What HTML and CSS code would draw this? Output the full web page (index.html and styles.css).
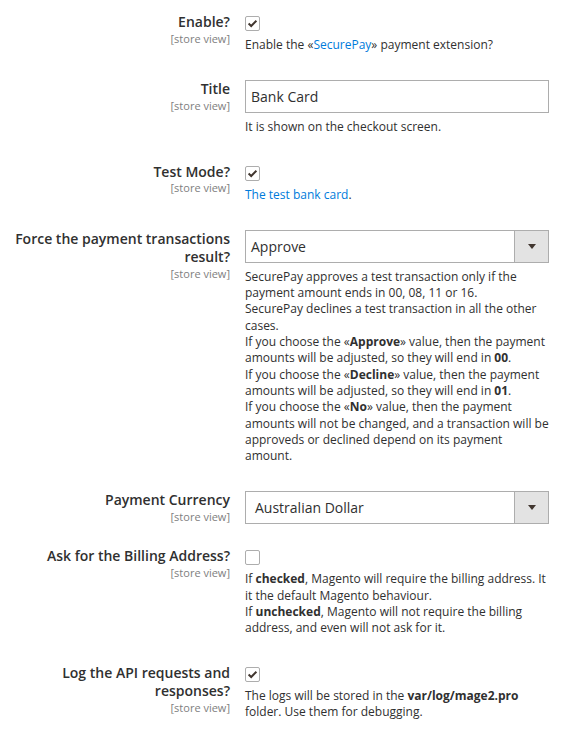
FILE: index.html
```html
<!DOCTYPE html>
<html lang="en">
<head>
<meta charset="utf-8">
<title>SecurePay settings</title>
<link rel="stylesheet" href="styles.css">
</head>
<body>
<div class="form">
  <div class="row">
    <div class="label-cell"><div class="label">Enable?</div><div class="scope">[store view]</div></div>
    <div class="control-cell">
      <span class="checkbox"><svg viewBox="0 0 15 15" width="15" height="15"><path d="M3.6 7.6 L6.2 10 L11.4 4.8" fill="none" stroke="#41362f" stroke-width="2"/></svg></span>
      <div class="note note-check">Enable the «<a class="link">SecurePay</a>» payment extension?</div>
    </div>
  </div>

  <div class="row">
    <div class="label-cell"><div class="label">Title</div><div class="scope">[store view]</div></div>
    <div class="control-cell">
      <div class="input">Bank Card</div>
      <div class="note">It is shown on the checkout screen.</div>
    </div>
  </div>

  <div class="row">
    <div class="label-cell"><div class="label">Test Mode?</div><div class="scope">[store view]</div></div>
    <div class="control-cell">
      <span class="checkbox"><svg viewBox="0 0 15 15" width="15" height="15"><path d="M3.6 7.6 L6.2 10 L11.4 4.8" fill="none" stroke="#41362f" stroke-width="2"/></svg></span>
      <div class="note note-check"><a class="link">The test bank card</a>.</div>
    </div>
  </div>

  <div class="row">
    <div class="label-cell"><div class="label">Force the payment transactions result?</div><div class="scope">[store view]</div></div>
    <div class="control-cell">
      <div class="select"><span class="select-value">Approve</span><span class="select-arrow"></span></div>
      <div class="note">SecurePay approves a test transaction only if the payment amount ends in 00, 08, 11 or 16.<br>SecurePay declines a test transaction in all the other cases.<br>If you choose the «<b>Approve</b>» value, then the payment amounts will be adjusted, so they will end in <b>00</b>.<br>If you choose the «<b>Decline</b>» value, then the payment amounts will be adjusted, so they will end in <b>01</b>.<br>If you choose the «<b>No</b>» value, then the payment amounts will not be changed, and a transaction will be approveds or declined depend on its payment amount.</div>
    </div>
  </div>

  <div class="row row-compact">
    <div class="label-cell"><div class="label">Payment Currency</div><div class="scope">[store view]</div></div>
    <div class="control-cell">
      <div class="select"><span class="select-value select-value-wide">Australian Dollar</span><span class="select-arrow"></span></div>
    </div>
  </div>

  <div class="row">
    <div class="label-cell"><div class="label">Ask for the Billing Address?</div><div class="scope">[store view]</div></div>
    <div class="control-cell">
      <span class="checkbox"></span>
      <div class="note note-check">If <b>checked</b>, Magento will require the billing address. It it the default Magento behaviour.<br>If <b>unchecked</b>, Magento will not require the billing address, and even will not ask for it.</div>
    </div>
  </div>

  <div class="row">
    <div class="label-cell"><div class="label">Log the API requests and responses?</div><div class="scope">[store view]</div></div>
    <div class="control-cell">
      <span class="checkbox"><svg viewBox="0 0 15 15" width="15" height="15"><path d="M3.6 7.6 L6.2 10 L11.4 4.8" fill="none" stroke="#41362f" stroke-width="2"/></svg></span>
      <div class="note note-check">The logs will be stored in the <b>var/log/mage2.pro</b> folder. Use them for debugging.</div>
    </div>
  </div>
</div>
</body>
</html>
```

FILE: styles.css
```css
html, body {
  margin: 0;
  padding: 0;
  background: #ffffff;
}

body {
  font-family: "Open Sans", "Liberation Sans", sans-serif;
  color: #303030;
}

.form {
  padding-top: 13px;
  display: flex;
  flex-direction: column;
}

.row {
  display: grid;
  grid-template-columns: 230px 304px;
  column-gap: 15px;
  align-items: start;
  padding-bottom: 27px;
}

.row-compact {
  padding-bottom: 23px;
}

.label-cell {
  padding-left: 10px;
  text-align: right;
}

.label {
  font-size: 14px;
  font-weight: 600;
  line-height: 18.5px;
  color: #303030;
}

.scope {
  font-size: 11px;
  line-height: 11px;
  margin-top: 1px;
  color: #808080;
}

.control-cell {
  display: flex;
  flex-direction: column;
  align-items: flex-start;
}

.checkbox {
  display: block;
  box-sizing: border-box;
  width: 15px;
  height: 15px;
  margin-top: 3px;
  border: 1px solid #adadad;
  border-radius: 2px;
  background: #ffffff;
  position: relative;
}

.checkbox svg {
  position: absolute;
  left: -1px;
  top: -1px;
}

.note {
  margin-top: 6px;
  font-size: 12px;
  line-height: 16.3px;
  color: #303030;
}

.note b {
  font-weight: 700;
}

.link {
  color: #007bdb;
  text-decoration: none;
}

.input {
  box-sizing: border-box;
  width: 304px;
  height: 33px;
  border: 1px solid #adadad;
  padding: 0 5px;
  font-size: 14px;
  line-height: 31px;
  color: #303030;
}

.select {
  box-sizing: border-box;
  width: 304px;
  height: 33px;
  border: 1px solid #adadad;
  display: flex;
  align-items: stretch;
  font-size: 14px;
  color: #303030;
}

.select-value {
  flex: 1;
  padding-left: 5px;
  line-height: 31px;
}

.select-value-wide {
  padding-left: 9px;
}

.select-arrow {
  width: 33px;
  border-left: 1px solid #adadad;
  background: #e3e3e3;
  display: flex;
  align-items: center;
  justify-content: center;
}

.select-arrow::after {
  content: "";
  width: 0;
  height: 0;
  border-left: 4px solid transparent;
  border-right: 4px solid transparent;
  border-top: 5px solid #41362f;
}
```
